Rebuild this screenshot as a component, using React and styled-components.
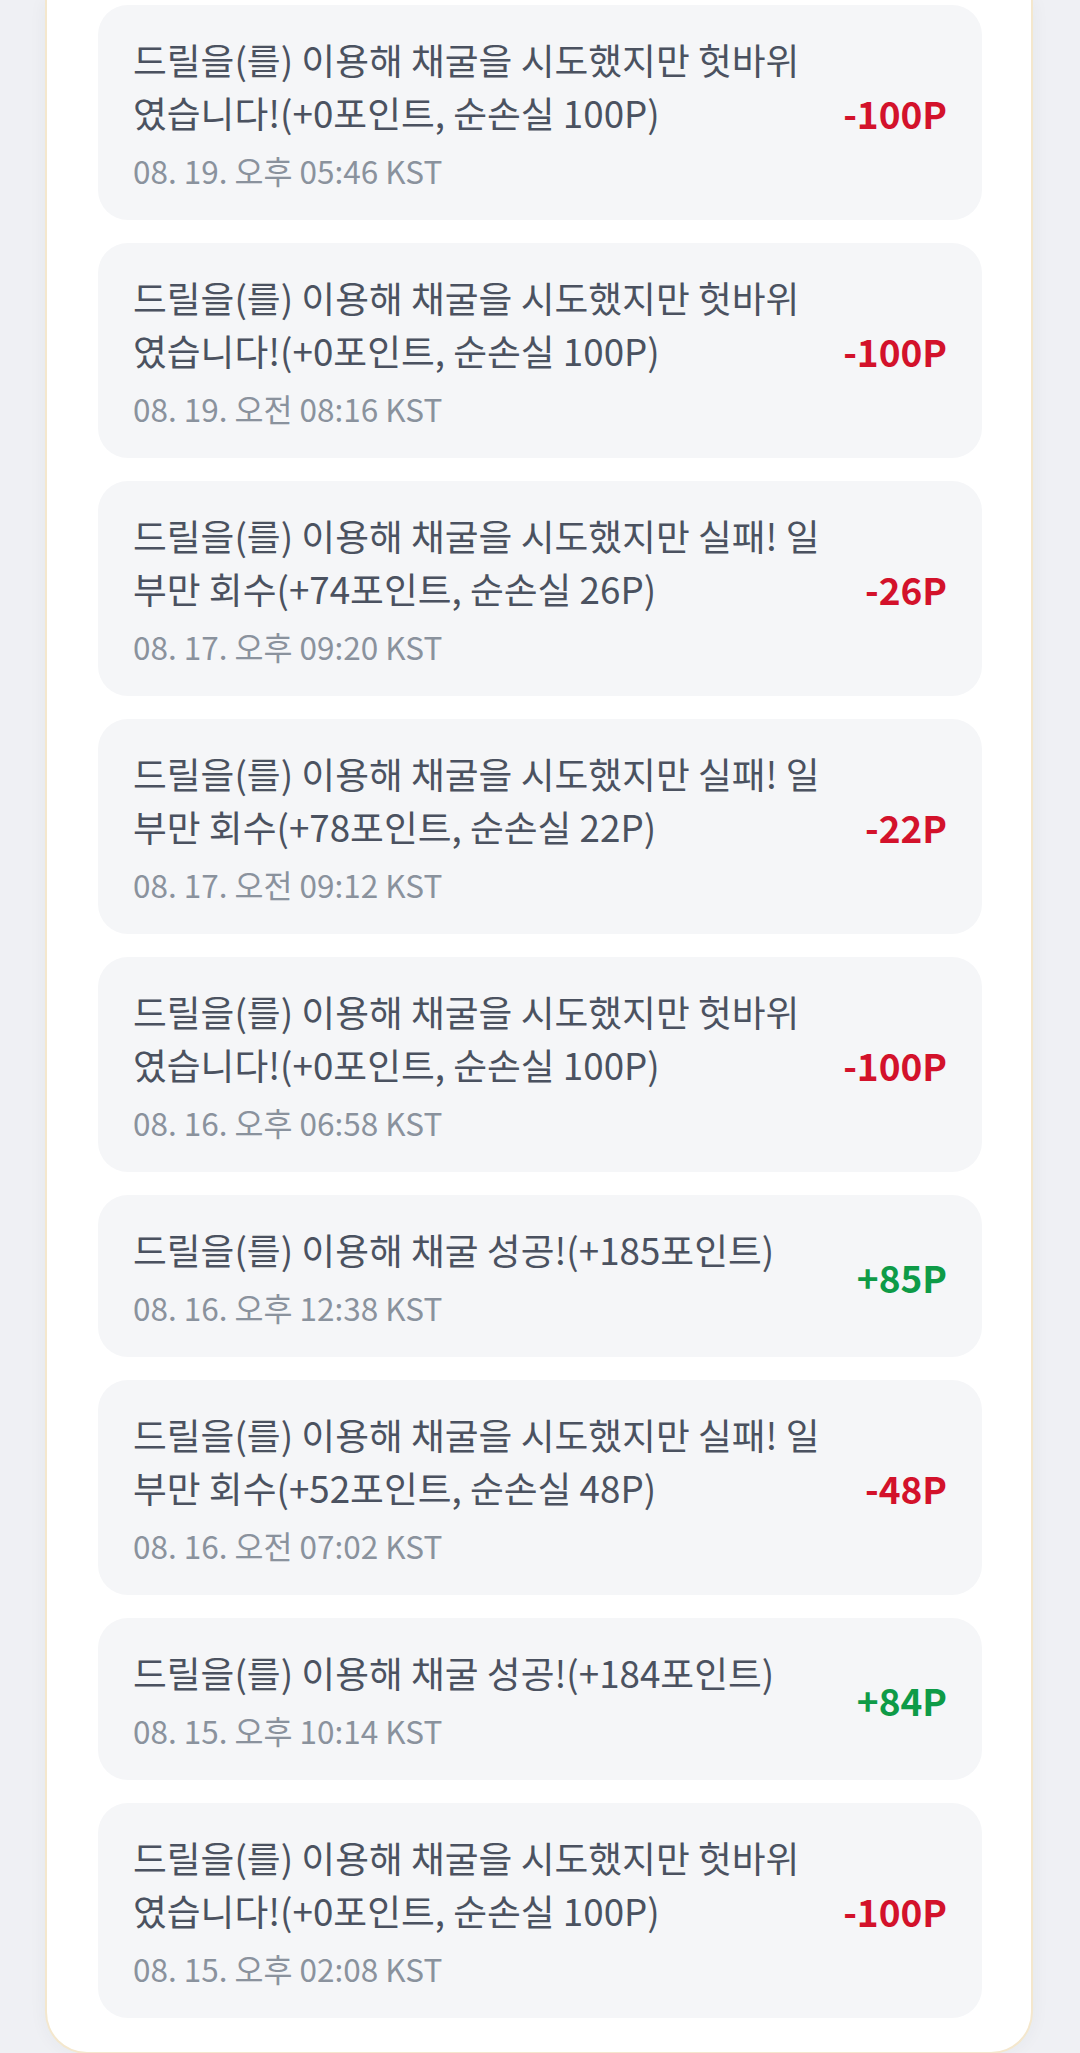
import React from 'react';
import styled, { createGlobalStyle } from 'styled-components';

const GlobalStyle = createGlobalStyle`
  body {
    margin: 0;
    background: #eff0f4;
    font-family: "Noto Sans CJK KR", "Noto Sans", sans-serif;
  }
`;

const history = [
  { message: '드릴을(를) 이용해 채굴을 시도했지만 헛바위였습니다!(+0포인트, 순손실 100P)', time: '08. 19. 오후 05:46 KST', amount: -100 },
  { message: '드릴을(를) 이용해 채굴을 시도했지만 헛바위였습니다!(+0포인트, 순손실 100P)', time: '08. 19. 오전 08:16 KST', amount: -100 },
  { message: '드릴을(를) 이용해 채굴을 시도했지만 실패! 일부만 회수(+74포인트, 순손실 26P)', time: '08. 17. 오후 09:20 KST', amount: -26 },
  { message: '드릴을(를) 이용해 채굴을 시도했지만 실패! 일부만 회수(+78포인트, 순손실 22P)', time: '08. 17. 오전 09:12 KST', amount: -22 },
  { message: '드릴을(를) 이용해 채굴을 시도했지만 헛바위였습니다!(+0포인트, 순손실 100P)', time: '08. 16. 오후 06:58 KST', amount: -100 },
  { message: '드릴을(를) 이용해 채굴 성공!(+185포인트)', time: '08. 16. 오후 12:38 KST', amount: 85 },
  { message: '드릴을(를) 이용해 채굴을 시도했지만 실패! 일부만 회수(+52포인트, 순손실 48P)', time: '08. 16. 오전 07:02 KST', amount: -48 },
  { message: '드릴을(를) 이용해 채굴 성공!(+184포인트)', time: '08. 15. 오후 10:14 KST', amount: 84 },
  { message: '드릴을(를) 이용해 채굴을 시도했지만 헛바위였습니다!(+0포인트, 순손실 100P)', time: '08. 15. 오후 02:08 KST', amount: -100 },
];

const Page = styled.div`
  padding: 0 47px 0 45px;
`;

const Panel = styled.section`
  display: flex;
  flex-direction: column;
  gap: 23px;
  background: #ffffff;
  border: 2px solid #f4e7cd;
  border-top: none;
  border-radius: 0 0 42px 42px;
  box-shadow: 0 0 18px rgba(40, 50, 80, 0.05);
  padding: 5px 49px 34px 51px;
`;

const Entry = styled.div`
  display: flex;
  align-items: center;
  gap: 32px;
  background: #f5f6f8;
  border-radius: 30px;
  padding: 28px 35px 27px;
`;

const Body = styled.div`
  flex: 1;
  min-width: 0;
`;

const Message = styled.div`
  font-size: 36.75px;
  line-height: 53px;
  color: #4b5260;
`;

const Time = styled.div`
  margin-top: 8px;
  font-size: 31.5px;
  line-height: 46px;
  color: #8a929d;
`;

const Amount = styled.div`
  flex-shrink: 0;
  font-size: 37px;
  font-weight: 700;
  color: ${({ gain }) => (gain ? '#0e9b47' : '#d3122b')};
`;

export default function App() {
  return (
    <>
      <GlobalStyle />
      <Page>
        <Panel>
          {history.map((item, i) => (
            <Entry key={i}>
              <Body>
                <Message>{item.message}</Message>
                <Time>{item.time}</Time>
              </Body>
              <Amount gain={item.amount > 0}>
                {item.amount > 0 ? `+${item.amount}P` : `${item.amount}P`}
              </Amount>
            </Entry>
          ))}
        </Panel>
      </Page>
    </>
  );
}
